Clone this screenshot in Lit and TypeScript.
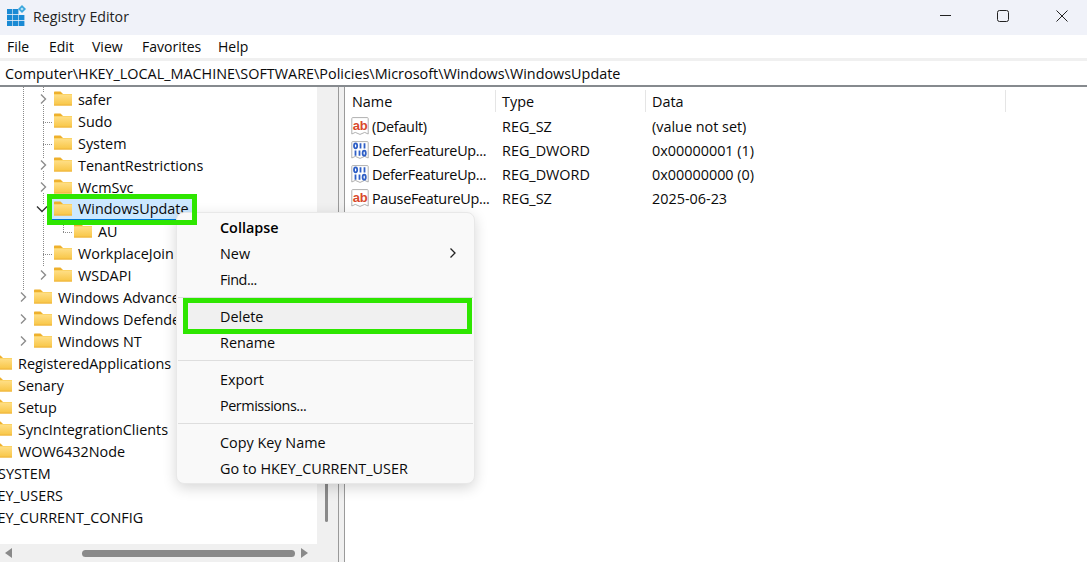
import { LitElement, html, css, svg } from "lit";
import { customElement } from "lit/decorators.js";

type Row = { label: string; x: number; chev?: "right" | "down"; sel?: boolean };

const rows: Row[] = [
  { label: "safer", x: 78, chev: "right" },
  { label: "Sudo", x: 78 },
  { label: "System", x: 78 },
  { label: "TenantRestrictions", x: 78, chev: "right" },
  { label: "WcmSvc", x: 78, chev: "right" },
  { label: "WindowsUpdate", x: 78, chev: "down", sel: true },
  { label: "AU", x: 98 },
  { label: "WorkplaceJoin", x: 78 },
  { label: "WSDAPI", x: 78, chev: "right" },
  { label: "Windows Advanced Threat Protection", x: 58, chev: "right" },
  { label: "Windows Defender", x: 58, chev: "right" },
  { label: "Windows NT", x: 58, chev: "right" },
  { label: "RegisteredApplications", x: 18 },
  { label: "Senary", x: 18 },
  { label: "Setup", x: 18 },
  { label: "SyncIntegrationClients", x: 18 },
  { label: "WOW6432Node", x: 18 },
  { label: "SYSTEM", x: -2 },
  { label: "HKEY_USERS", x: -22 },
  { label: "HKEY_CURRENT_CONFIG", x: -22 },
];

const values = [
  { kind: "ab", name: "(Default)", type: "REG_SZ", data: "(value not set)" },
  { kind: "bin", name: "DeferFeatureUp...", type: "REG_DWORD", data: "0x00000001 (1)" },
  { kind: "bin", name: "DeferFeatureUp...", type: "REG_DWORD", data: "0x00000000 (0)" },
  { kind: "ab", name: "PauseFeatureUp...", type: "REG_SZ", data: "2025-06-23" },
];

const folder = html`<svg class="folder" width="18" height="15" viewBox="0 0 18 15">
  <defs><linearGradient id="fg" x1="0" y1="0" x2="0" y2="1"><stop offset="0" stop-color="#ffe08a"/><stop offset="1" stop-color="#f8c544"/></linearGradient></defs>
  <path d="M0 1.2Q0 .5.7.5H6.5L9 3H0Z" fill="#eeb02c"/>
  <rect x="0" y="3" width="18" height="11.5" rx=".6" fill="url(#fg)"/>
  <rect x="0" y="3" width="18" height="1" fill="#fbd366"/>
  <rect x="0" y="13.6" width="18" height=".9" fill="#eeb23c"/>
</svg>`;

const chevRight = html`<svg class="chev" width="10" height="12" viewBox="0 0 10 12"><path d="M3 1.5L7.5 6L3 10.5" fill="none" stroke="#8c8c8c" stroke-width="1.4"/></svg>`;
const chevDown = html`<svg class="chev down" width="12" height="10" viewBox="0 0 12 10"><path d="M1 2.5L6 7.5L11 2.5" fill="none" stroke="#333" stroke-width="1.4"/></svg>`;

const iconPage = svg`<path d="M.8 1.5Q.8 .6 1.7 .6H16.3Q17.2 .6 17.2 1.5V17L13.7 15.4L9 17.4L4.3 15.4L.8 17Z" fill="#fff" stroke="#b0b0b0"/>`;

const abIcon = html`<svg class="vicon" width="18" height="18" viewBox="0 0 18 18">${iconPage}
  <text x="9" y="12.5" text-anchor="middle" font-family="Liberation Sans, sans-serif" font-size="13" font-weight="700" fill="#d8492c">ab</text></svg>`;
const binIcon = html`<svg class="vicon" width="18" height="18" viewBox="0 0 18 18">${iconPage}
  <g fill="none" stroke="#2f5fc6" stroke-width="1.8">
    <ellipse cx="4.6" cy="4.8" rx="1.6" ry="2.5"/><path d="M9.5 2.2V7.4M13.5 2.2V7.4"/>
    <path d="M4.5 9.6V14.8M8.5 9.6V14.8"/><ellipse cx="13.2" cy="12.2" rx="1.6" ry="2.5"/>
  </g></svg>`;

@customElement("app-root")
export class AppRoot extends LitElement {
  static styles = css`
    :host { display: block; width: 1087px; height: 562px; position: relative; overflow: hidden; background: #fff;
      font-family: "Open Sans", "Noto Sans", sans-serif; font-size: 14.4px; color: #0a0a0a; }
    .title { height: 35px; background: #f0f2f9; display: flex; align-items: center; }
    .appicon { margin-left: 7px; margin-right: 7px; margin-top: -4px; }
    .title .t { flex: 1; font-size: 14.2px; color: #222; margin-top: -2px; }
    .wins { display: flex; align-items: center; gap: 47px; padding-right: 19px; padding-bottom: 3px; }
    .wmin { margin-right: -1px; }
    .menu { height: 23px; display: grid; grid-template-columns: 42px 43px 50px 76px auto; align-items: center; padding-left: 7px; font-size: 14px; }
    .sep { height: 3px; background: #f0f0f0; }
    .addr { height: 24px; display: flex; align-items: center; padding-left: 5px; white-space: nowrap; }
    .rule { height: 2px; background: #868a8e; }
    .main { display: flex; height: 475px; }
    .left { width: 317px; flex: none; position: relative; overflow: hidden; display: flex; flex-direction: column; }
    .tree { flex: 1; position: relative; overflow: hidden; padding-top: 1px; }
    .lines { position: absolute; left: 0; top: 0; }
    .row { height: 22px; display: flex; align-items: center; position: relative; white-space: nowrap; }
    .chevcell { width: 16px; height: 22px; flex: none; display: flex; align-items: center; justify-content: center; }
    .chev { background: #fff; }
    .chev.down { margin-left: -2px; }
    .body { display: flex; align-items: center; margin-left: 3px; height: 22px; }
    .folder { flex: none; margin-right: 6px; margin-top: -1px; }
    .body.sel { margin-left: 1px; padding-left: 2px; padding-right: 3px; height: 22px; background: #cce8ff;
      border-right: 1px solid #0078d4; border-bottom: 1px solid #0078d4; box-sizing: border-box; }
    .hbar { height: 18px; background: #f0f0f0; position: relative; display: flex; align-items: center; justify-content: space-between; padding: 0 8px 0 5px; }
    .hthumb { position: absolute; left: 82px; width: 213px; height: 7px; top: 6px; border-radius: 4px; background: #8a8a8a; }
    .vbar { width: 21px; flex: none; background: #f0f0f0; position: relative; }
    .vthumb { position: absolute; left: 8px; width: 3px; top: 200px; height: 235px; border-radius: 2px; background: #8a8a8a; }
    .split { width: 7px; flex: none; background: #f0f0f0; border-left: 1px solid #9a9a9a; border-right: 1px solid #9a9a9a; box-sizing: border-box; }
    .list { flex: 1; }
    .head { height: 28px; display: flex; align-items: center; margin-bottom: 1px; }
    .hname { width: 150px; padding-left: 7px; box-sizing: border-box; flex: none; }
    .htype { width: 150px; flex: none; padding-left: 7px; box-sizing: border-box; }
    .hdata { width: 360px; flex: none; padding-left: 7px; box-sizing: border-box; }
    .hsep { width: 1px; height: 22px; background: #e5e5e5; flex: none; margin-right: -1px; }
    .rows { margin-top: -2px; }
    .vrow { height: 24px; display: flex; align-items: center; white-space: nowrap; }
    .vname { width: 157px; flex: none; display: flex; align-items: center; gap: 3px; padding-left: 6px; box-sizing: border-box; letter-spacing: -0.3px; }
    .vicon { flex: none; }
    .vcell { width: 150px; flex: none; }
    .ctx { position: absolute; left: 176px; top: 212px; width: 299px; height: 272px; box-sizing: border-box; padding-top: 1px;
      background: #f9f9f9; border-radius: 8px; border: 1px solid #e8e8e8; box-shadow: 0 4px 14px rgba(0,0,0,.16); }
    .it { height: 26px; display: flex; align-items: center; justify-content: space-between; padding: 0 17px 0 43px; }
    .it.b { font-weight: 600; color: #000; }
    .it.tight { letter-spacing: -0.45px; }
    .it.hot { background: #f0f0f0; margin: 0 6px; padding-left: 37px; padding-right: 11px; }
    .cs { height: 1px; background: #dedede; margin: 5px 1px; }
    .mark { position: absolute; box-sizing: border-box; border: 5px solid #2ee600; }
    .m1 { left: 47px; top: 194px; width: 150px; height: 31px; }
    .m2 { left: 183px; top: 298px; width: 289px; height: 36px; }
  `;

  render() {
    return html`
      <div class="title">
        <svg class="appicon" width="19" height="21" viewBox="0 0 19 21">
          <g fill="#1a8ad4"><rect x="0" y="4" width="5.4" height="5.2"/><rect x="6" y="4" width="5.4" height="5.2"/>
          <rect x="0" y="10" width="5.4" height="5.2"/><rect x="6" y="10" width="5.4" height="5.2"/><rect x="12" y="10" width="5.4" height="5.2"/>
          <rect x="0" y="16" width="5.4" height="5"/><rect x="6" y="16" width="5.4" height="5"/><rect x="12" y="16" width="5.4" height="5"/></g>
          <path d="M15 0L19 4L15 8L11 4Z" fill="#3ba7dd"/><path d="M15 2.4L16.6 4L15 5.6L13.4 4Z" fill="#bfe4f7"/>
        </svg>
        <span class="t">Registry Editor</span>
        <div class="wins">
          <svg class="wmin" width="11" height="12"><rect y="5" width="11" height="1" fill="#222"/></svg>
          <svg width="12" height="12"><rect x=".5" y=".5" width="11" height="11" rx="2" fill="none" stroke="#222"/></svg>
          <svg width="12" height="12"><path d="M.5 .5L11.5 11.5M11.5 .5L.5 11.5" stroke="#222" fill="none"/></svg>
        </div>
      </div>
      <div class="menu"><span>File</span><span>Edit</span><span>View</span><span>Favorites</span><span>Help</span></div>
      <div class="sep"></div>
      <div class="addr">Computer\\HKEY_LOCAL_MACHINE\\SOFTWARE\\Policies\\Microsoft\\Windows\\WindowsUpdate</div>
      <div class="rule"></div>
      <div class="main">
        <div class="left">
          <div class="tree">
            <svg class="lines" width="317" height="300">
              <g stroke="#8a8a8a" stroke-dasharray="1 1" fill="none">
                <path d="M23.5 0V205M43.5 0V180M63.5 134V146"/>
                <path d="M43 35.5H53M43 57.5H53M43 167.5H53M63 145.5H73"/>
              </g>
            </svg>
            ${rows.map(
              (r) => html`<div class="row" style="margin-left:${r.x - 43}px">
                <div class="chevcell">${r.chev === "right" ? chevRight : r.chev === "down" ? chevDown : ""}</div>
                <div class="body ${r.sel ? "sel" : ""}">${folder}<span>${r.label}</span></div>
              </div>`
            )}
          </div>
          <div class="hbar">
            <svg width="8" height="10"><path d="M7 0V10L0 5Z" fill="#8a8a8a"/></svg>
            <div class="hthumb"></div>
            <svg width="8" height="10"><path d="M0 0V10L7 5Z" fill="#8a8a8a"/></svg>
          </div>
        </div>
        <div class="vbar"><div class="vthumb"></div></div>
        <div class="split"></div>
        <div class="list">
          <div class="head">
            <div class="hname">Name</div><div class="hsep"></div>
            <div class="htype">Type</div><div class="hsep"></div>
            <div class="hdata">Data</div><div class="hsep"></div>
          </div>
          <div class="rows">
          ${values.map(
            (v) => html`<div class="vrow">
              <div class="vname">${v.kind === "ab" ? abIcon : binIcon}<span>${v.name}</span></div>
              <div class="vcell">${v.type}</div>
              <div class="vcell">${v.data}</div>
            </div>`
          )}
          </div>
        </div>
      </div>
      <div class="ctx">
        <div class="it b">Collapse</div>
        <div class="it"><span>New</span><svg width="8" height="12" viewBox="0 0 8 12"><path d="M1.5 1.5L6 6L1.5 10.5" fill="none" stroke="#222" stroke-width="1.3"/></svg></div>
        <div class="it tight">Find...</div>
        <div class="cs"></div>
        <div class="it hot">Delete</div>
        <div class="it">Rename</div>
        <div class="cs"></div>
        <div class="it">Export</div>
        <div class="it tight">Permissions...</div>
        <div class="cs"></div>
        <div class="it">Copy Key Name</div>
        <div class="it">Go to HKEY_CURRENT_USER</div>
      </div>
      <div class="mark m1"></div>
      <div class="mark m2"></div>
    `;
  }
}
